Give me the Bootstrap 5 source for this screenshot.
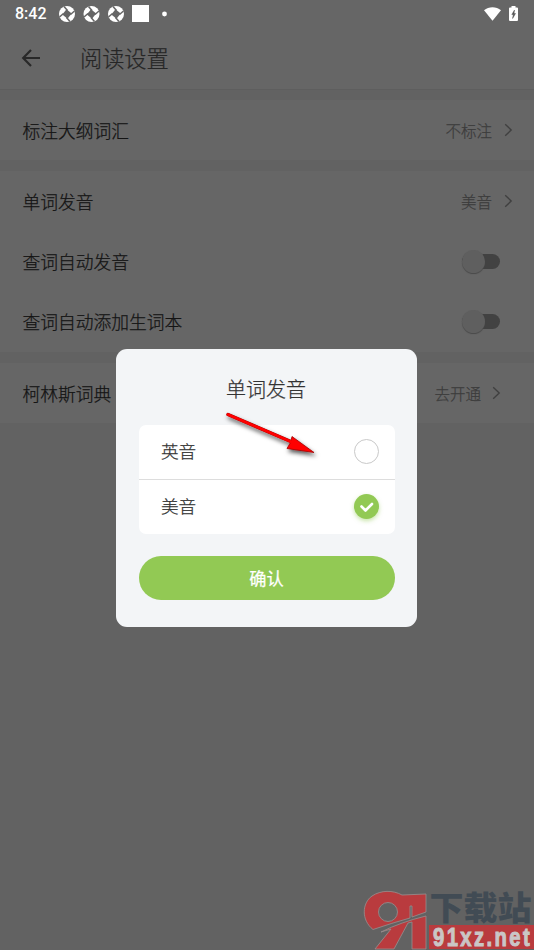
<!DOCTYPE html>
<html lang="zh-CN">
<head>
<meta charset="utf-8">
<meta name="viewport" content="width=device-width, initial-scale=1">
<title>阅读设置</title>
<link rel="stylesheet" href="https://cdn.jsdelivr.net/npm/bootstrap@5.3.0/dist/css/bootstrap.min.css">
<style>
body{background:#626262;font-family:"Noto Sans CJK SC",sans-serif;font-weight:300;color:#141414;height:950px;overflow:hidden}
h1,h2,.setting,.choice,.confirm{-webkit-text-stroke:.25px currentColor}
svg{display:block;flex:none}
.topbar{background:#666;height:90px;border-bottom:1px solid #5e5e5e}
.statusbar{height:27px;padding:0 16px 0 15px;font:500 16px/27px Roboto,sans-serif}
.titlebar{height:61px;padding-left:21px}
.titlebar h1{font-size:22.2px;line-height:30px;font-weight:300;color:#262626;margin:0 0 2px 39px}
.settings{padding-top:10px;gap:11px}
.group{background:#666}
.setting{height:60px;padding:0 21px 0 22.5px;font-size:17.75px}
.group.tall{padding-bottom:1px}
.value{font-size:15.5px;color:#3c3c3c;gap:12px;padding-top:1px}
.value svg{margin-top:-2px}
.value.near{margin-right:12px;gap:11px}
.toggle{width:38px;height:15px;margin-right:13px;border-radius:8px;background:#424242}
.knob{left:0;top:-4px;width:23px;height:23px;border-radius:50%;background:#5f5f5f;box-shadow:0 1px 1px #4a4a4a}
.dialog-box{left:116px;top:349px;width:301px;height:278px;border-radius:11px;background:#f3f5f7;padding:22px 22px 27px 23px;color:#333}
.dialog-box h2{font-size:20px;line-height:36px;margin:0 2px 18px 0;font-weight:300}
.choices{background:#fff;border-radius:7px;height:109px}
.choice{height:54px;padding:0 16px 1px 22px;font-size:17.6px}
.choice+.choice{border-top:1px solid #ddd;height:55px}
.ring{width:25px;height:25px;border:1px solid #c9c9c9;border-radius:50%}
.picked{width:25px;height:25px;border-radius:50%;background:#92c954;box-shadow:0 2px 4px #92c95480}
.confirm,.confirm:hover{height:44px;margin-top:22px;padding:6px 14px 6px 13px;border-radius:22px;background:#92c954;color:#fff;font-size:17.2px;line-height:26px;border:0}
.pointer{left:215px;top:405px}
.brand{left:360px;top:885px}
</style>
<script src="https://cdn.jsdelivr.net/npm/bootstrap@5.3.0/dist/js/bootstrap.bundle.min.js"></script>
</head>
<body class="position-relative">
<svg width="0" height="0" class="position-absolute"><defs>
<symbol id="shutter" viewBox="0 0 16 16"><circle cx="8" cy="8" r="8" fill="#fff"/><path d="M7.500 3.300 12.700 7.500 8.500 12.700 3.300 8.500Z" fill="#666"/><g stroke="#666" stroke-width="1.500"><path d="M8.500 4.500 5 .5M11.500 8.500 15.500 5M7.500 11.500 11 15.500M4.500 7.500 .5 11"/></g></symbol>
<symbol id="chev" viewBox="0 0 9 14"><path d="m1.200 1.200 6 5.800-6 5.800" fill="none" stroke="#404040" stroke-width="1.400"/></symbol>
</defs></svg>
<header class="topbar">
 <div class="statusbar d-flex align-items-center text-white">
  <span>8:42</span>
  <div class="d-flex align-items-center ms-2 ps-1">
   <svg width="16" height="16"><use href="#shutter"/></svg>
   <svg class="ms-2" width="17" height="16"><use href="#shutter"/></svg>
   <svg class="ms-2" width="16" height="16"><use href="#shutter"/></svg>
   <svg class="ms-2" width="17" height="17"><path fill="#fff" d="M0 0h17v17H0z"/></svg>
   <svg class="ms-2" width="16" height="16"><circle cx="7.500" cy="8" r="2.400" fill="#fff"/></svg>
  </div>
  <div class="d-flex align-items-center ms-auto gap-2">
   <svg width="17" height="14" viewBox="0 0 17 14"><path d="M0 3.200C4.800-.9 12.200-.9 17 3.200L8.500 13.800Z" fill="#fff"/></svg>
   <svg width="9" height="15" viewBox="0 0 9 15"><path d="M2.500 0h4v1.500H8a1 1 0 0 1 1 1V14a1 1 0 0 1-1 1H1a1 1 0 0 1-1-1V2.500a1 1 0 0 1 1-1h1.500z" fill="#fff"/><path d="M5.500 4 2.800 8.500h1.500L3.600 12.500 6.500 7.500H5z" fill="#555" stroke="#555" stroke-width=".5"/></svg>
  </div>
 </div>
 <div class="titlebar d-flex align-items-center">
  <svg width="20" height="18" viewBox="0 0 20 18"><path d="M19 9H2.500M10 1 2.200 9l7.800 8" fill="none" stroke="#292929" stroke-width="2.200"/></svg>
  <h1>阅读设置</h1>
 </div>
</header>
<main class="settings d-flex flex-column">
 <section class="group">
  <div class="setting d-flex align-items-center justify-content-between"><span>标注大纲词汇</span><span class="value d-flex align-items-center">不标注<svg width="9" height="14"><use href="#chev"/></svg></span></div>
 </section>
 <section class="group tall">
  <div class="setting d-flex align-items-center justify-content-between"><span>单词发音</span><span class="value d-flex align-items-center">美音<svg width="9" height="14"><use href="#chev"/></svg></span></div>
  <div class="setting d-flex align-items-center justify-content-between"><span>查词自动发音</span><span class="toggle position-relative"><i class="knob position-absolute"></i></span></div>
  <div class="setting d-flex align-items-center justify-content-between"><span>查词自动添加生词本</span><span class="toggle position-relative"><i class="knob position-absolute"></i></span></div>
 </section>
 <section class="group">
  <div class="setting d-flex align-items-center justify-content-between"><span>柯林斯词典</span><span class="value near d-flex align-items-center">去开通<svg width="9" height="14"><use href="#chev"/></svg></span></div>
 </section>
</main>
<div class="dialog-box position-absolute" role="dialog">
 <h2 class="text-center">单词发音</h2>
 <div class="choices">
  <div class="choice d-flex align-items-center justify-content-between"><span>英音</span><span class="ring"></span></div>
  <div class="choice d-flex align-items-center justify-content-between"><span>美音</span><span class="picked"><svg width="25" height="25" viewBox="0 0 25 25"><path d="m7.500 12.500 4 4 6.500-6.500" fill="none" stroke="#fff" stroke-width="2.600" stroke-linecap="round" stroke-linejoin="round"/></svg></span></div>
 </div>
 <button class="btn confirm w-100">确认</button>
</div>
<svg class="pointer position-absolute" width="115" height="65" viewBox="215 405 115 65">
 <defs><filter id="sh" x="-20%" y="-30%" width="140%" height="180%"><feDropShadow dx="1.500" dy="3" stdDeviation="2" flood-opacity=".65"/></filter></defs>
 <g filter="url(#sh)"><path d="M228 414.500 292 442" stroke="#a00000" stroke-width="3.400" stroke-linecap="round"/><path d="M292 436.500 314 452.500 287 448.500 290.500 442.500Z" fill="#f00" stroke="#a00000" stroke-width=".8"/><path d="M228 414.500 294 443" stroke="#f00" stroke-width="2.700" stroke-linecap="round"/></g>
</svg>
<svg class="brand position-absolute" width="174" height="65" viewBox="360 885 174 65">
 <g fill="#b93b3e" stroke="#969090" stroke-width=".8">
  <path fill-rule="evenodd" d="M373 929.500C361 920 362 903 372 896C381 890 393 890 402 895L426 894V912L412 917V906H410V918Q392 923 373 929.500ZM397.500 912a9.500 9.500 0 1 0-19 0a9.500 9.500 0 1 0 19 0Z"/>
  <path d="M381 932Q401 922 426 916V949H412V922L408 923L394 949H375L391 929Z"/>
 </g>
 <path d="M429 925h105v24H429z" fill="#b93b3e"/>
 <text x="429.500" y="919.500" textLength="102" lengthAdjust="spacingAndGlyphs" font-family="Noto Sans CJK SC,sans-serif" font-weight="900" font-size="33" fill="#414b54">下载站</text>
 <text transform="translate(433 945.500) scale(.78 1)" textLength="124" lengthAdjust="spacing" font-family="Liberation Sans,sans-serif" font-weight="700" font-size="26" fill="#cac6c6" stroke="#cac6c6" stroke-width="1">91xz.net</text>
</svg>
</body>
</html>
